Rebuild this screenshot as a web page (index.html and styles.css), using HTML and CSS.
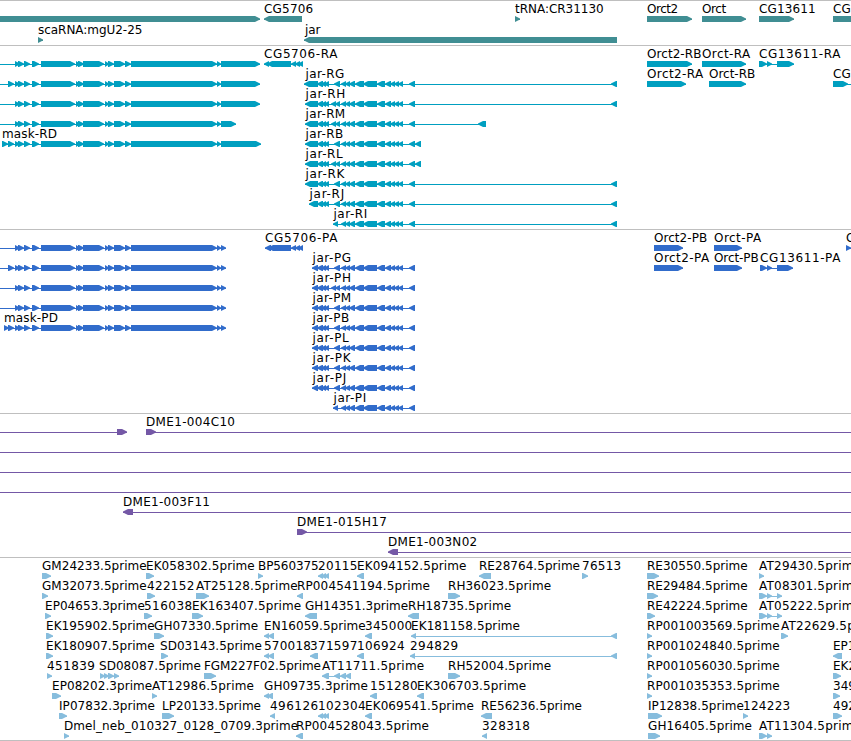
FILE: index.html
```html
<!DOCTYPE html>
<html lang="en">
<head>
<meta charset="utf-8">
<title>Genome tracks</title>
<link rel="stylesheet" href="styles.css">
</head>
<body>
<main class="browser" id="browser"></main>
<script src="tracks.js"></script>
</body>
</html>
```
FILE: styles.css
```css
* {
  box-sizing: border-box;
}

body {
  margin: 0;
  background: #fff;
  overflow: hidden;
}

.browser {
  display: flex;
  flex-direction: column;
  width: 851px;
  height: 741px;
  border-bottom: 1px solid #bfbfbf;
  overflow: hidden;
}

.track {
  display: flex;
  flex-direction: column;
  padding-top: 2px;
  border-top: 1px solid #bfbfbf;
}

.genes { height: 45px; color: #408e93; }
.transcripts { height: 184px; color: #009fc0; }
.proteins { height: 184px; color: #316ccb; }
.clones { height: 144px; color: #7458a6; }
.ests { height: 183px; color: #87bddd; }

.row {
  display: block;
  flex: none;
  width: 851px;
  height: 20px;
  overflow: visible;
}

.genes .row {
  height: 21px;
}

.shape {
  fill: currentColor;
}

.label {
  fill: #000;
  font: 12px "DejaVu Sans", sans-serif;
}
```
FILE: tracks.js
```js
// A feature has a label, a strand ('>' or '<'), exons as [start, end],
// and optionally the label's x and the extent of its connecting line.
const NS = 'http://www.w3.org/2000/svg';
const f = (label, dir, exons, labelX, from, to) => ({ label, dir, exons, labelX, from, to });

const maskBody = [[15,20],[18,24],[24,30],[32,39],[41,75],[76,80],[78,84],[83,104],[105,109],[108,114],[114,125],[125,131],[131,217],[217,221]];
const mask = (end, lead = [], label = '', x = 0) =>
  f(label, '>', [...lead, ...maskBody, [221, end]], x, lead.length > 1 ? undefined : 0);

const jarBody = [[341,346],[345,350],[349,355],[355,364],[363,377],[377,385],[385,391],[390,395],[394,399],[398,403],[409,415]];
const jar = (label, x, start, split, tail = []) => {
  const head = start === 333 ? [[333,338]]
    : [[start,318],[317,323],[321,326],[324,329], ...(split ? [[331,336],[335,340]] : [[334,340]])];
  return f(label, '<', [...head, ...jarBody, ...tail], x);
};
const far = [[611,617]];

const tracks = {
  genes: [
    [f('', '>', [[0,260]]), f('CG5706', '<', [[264,302]]), f('tRNA:CR31130', '>', [[515,520]]), f('Orct2', '>', [[647,692]]),
     f('Orct', '>', [[702,746]]), f('CG13611', '>', [[759,794]]), f('CG', '>', [[833,870]])],
    [f('scaRNA:mgU2-25', '>', [[38,43]]), f('jar', '<', [[304,617]], 305)]
  ],
  transcripts: [
    [mask(260), f('CG5706-RA', '<', [[264,269],[267,291],[291,296],[295,300],[298,303]]), f('Orct2-RB', '>', [[647,692]]),
     f('Orct-RA', '>', [[702,746]]), f('CG13611-RA', '>', [[759,767],[767,772],[777,794]])],
    [mask(260, [[8,14]]), jar('jar-RG', 305.5, 304, false, far), f('Orct2-RA', '>', [[647,686]]), f('Orct-RB', '>', [[709,746]]),
     f('CG', '>', [[833,848]], 833, 833, 851)],
    [mask(260), jar('jar-RH', 305.5, 305, true, far)],
    [mask(236), jar('jar-RM', 305.5, 305, true, [[478,486]])],
    [mask(261, [[2,8],[8,14]], 'mask-RD', 2), jar('jar-RB', 305.5, 305, false, [[415,421]])],
    [jar('jar-RL', 305.5, 305, true, [[415,421]])],
    [jar('jar-RK', 305.5, 305, false, far)],
    [jar('jar-RJ', 309.5, 309, false, far)],
    [jar('jar-RI', 333.5, 333, false, far)]
  ],
  proteins: [
    [mask(226), f('CG5706-PA', '<', [[265,271],[268,291],[291,296],[295,300],[298,303]]), f('Orct2-PB', '>', [[654,683]]),
     f('Orct-PA', '>', [[714,742]]), f('C', '>', [[846,851]])],
    [mask(226, [[8,14]]), jar('jar-PG', 312.5, 312), f('Orct2-PA', '>', [[654,683]]), f('Orct-PB', '>', [[714,742]]),
     f('CG13611-PA', '>', [[760,767],[767,772],[777,793]])],
    [mask(226), jar('jar-PH', 312.5, 312, true)],
    [mask(226), jar('jar-PM', 312.5, 312)],
    [mask(226, [[4,9],[8,14]], 'mask-PD', 4), jar('jar-PB', 312.5, 312)],
    [jar('jar-PL', 312.5, 312)],
    [jar('jar-PK', 312.5, 312)],
    [jar('jar-PJ', 312.5, 312)],
    [jar('jar-PI', 333.5, 333)]
  ],
  clones: [
    [f('', '>', [[117,127]], 0, 0), f('DME1-004C10', '>', [[146,156]], 146, 146, 851)],
    [f('', '>', [], 0, 0, 851)],
    [f('', '>', [], 0, 0, 851)],
    [f('', '>', [], 0, 0, 851)],
    [f('DME1-003F11', '<', [[123,133]], 123, 123, 851)],
    [f('DME1-015H17', '>', [[297,307]], 297, 297, 851)],
    [f('DME1-003N02', '<', [[388,398]], 388, 388, 851)]
  ],
  ests: [
    [f('GM24233.5prime', '>', [[42,51]]), f('EK058302.5prime', '>', [[146,154]]), f('BP560375', '>', [[258,263]]),
     f('20115', '<', [[318,323],[321,326],[324,329]]), f('EK094152.5prime', '<', [[357,364]]), f('RE28764.5prime', '<', [[479,491]]),
     f('76513', '>', [[582,588]]), f('RE30550.5prime', '>', [[647,659]]), f('AT29430.5prime', '>', [[759,764]])],
    [f('GM32073.5prime', '>', [[42,48]]), f('422152', '>', [[147,155]]), f('AT25128.5prime', '>', [[196,209]]),
     f('RP004541194.5prime', '<', [[297,303]]), f('RH36023.5prime', '>', [[448,460]]), f('RE29484.5prime', '>', [[647,658]]),
     f('AT08301.5prime', '>', [[759,767],[767,772],[777,782]])],
    [f('EP04653.3prime', '>', [[45,51]]), f('516038', '>', [[144,152]]), f('EK163407.5prime', '>', [[192,203]]),
     f('GH14351.3prime', '<', [[305,317]]), f('RH18735.5prime', '<', [[408,419]]), f('RE42224.5prime', '>', [[647,655]]),
     f('AT05222.5prime', '>', [[759,767],[767,772],[777,782]])],
    [f('EK195902.5prime', '>', [[46,53]]), f('GH07330.5prime', '>', [[154,164]]), f('EN16059.5prime', '<', [[264,269],[268,274]]),
     f('345000', '<', [[365,372]]), f('EK181158.5prime', '<', [[411,416],[611,617]]), f('RP001003569.5prime', '>', [[647,652]]),
     f('AT22629.5prime', '>', [[781,788]])],
    [f('EK180907.5prime', '>', [[46,53]]), f('SD03143.5prime', '>', [[161,168]], 160), f('570018', '<', [[264,269],[268,274]]),
     f('371597', '<', [[310,318]]), f('106924', '<', [[357,364]]), f('294829', '<', [[410,415],[611,617]]),
     f('RP001024840.5prime', '>', [[647,652]]), f('EP1', '<', [[833,842]])],
    [f('451839', '>', [[47,52]]), f('SD08087.5prime', '>', [[100,105],[104,109],[108,114],[114,119]], 99), f('FGM227F02.5prime', '>', [[204,216]]),
     f('AT11711.5prime', '<', [[322,329],[334,340],[340,346],[345,351]]), f('RH52004.5prime', '>', [[448,460]]),
     f('RP001056030.5prime', '>', [[647,652]]), f('EK2', '>', [[833,841]])],
    [f('EP08202.3prime', '>', [[52,61]]), f('AT12986.5prime', '>', [[152,157]]), f('GH09735.3prime', '<', [[264,269],[267,273]]),
     f('151280', '<', [[370,377]]), f('EK306703.5prime', '<', [[417,424]]), f('RP001035353.5prime', '>', [[647,652]]),
     f('349', '>', [[833,840]])],
    [f('IP07832.3prime', '>', [[59,67]]), f('LP20133.5prime', '>', [[162,174]]), f('496126', '<', [[270,275]]),
     f('102304', '<', [[318,323],[321,326],[324,329]]), f('EK069541.5prime', '<', [[365,372]]), f('RE56236.5prime', '<', [[481,492]]),
     f('IP12838.5prime', '>', [[648,662]]), f('124223', '>', [[743,748]]), f('492', '>', [[833,842]])],
    [f('Dmel_neb_010327_0128_0709.3prime', '>', [[64,69]]), f('RP004528043.5prime', '<', [[296,303]]), f('328318', '<', [[482,487]]),
     f('GH16405.5prime', '>', [[648,660]]), f('AT11304.5prime', '>', [[759,767],[767,772]])]
  ]
};

// Right edge of each label, in canvas pixels.
const labelEnds = {
  'CG5706': 312.5, 'tRNA:CR31130': 603, 'Orct2': 677.5, 'Orct': 725.5, 'CG13611': 815, 'scaRNA:mgU2-25': 141.7, 'jar': 319.7,
  'CG5706-RA': 336.7, 'Orct2-RB': 700.7, 'Orct-RA': 749.5, 'CG13611-RA': 839.7, 'Orct2-RA': 702.5, 'Orct-RB': 754.5,
  'jar-RG': 343.5, 'jar-RH': 344.5, 'jar-RM': 344.5, 'jar-RB': 342.5, 'jar-RL': 342, 'jar-RK': 343.7, 'jar-RJ': 343.5, 'jar-RI': 366.5,
  'mask-RD': 56.3, 'mask-PD': 57.3, 'CG5706-PA': 336.7, 'Orct2-PB': 706.5, 'Orct2-PA': 708.5, 'Orct-PA': 760.5, 'Orct-PB': 758,
  'CG13611-PA': 839.7, 'jar-PG': 350.3, 'jar-PH': 350.3, 'jar-PM': 350.5, 'jar-PB': 348.5, 'jar-PL': 348, 'jar-PK': 350, 'jar-PJ': 345.7, 'jar-PI': 365.5,
  'DME1-004C10': 234.3, 'DME1-003F11': 209.3, 'DME1-015H17': 386.3, 'DME1-003N02': 476.5,
  'GM24233.5prime': 146, 'EK058302.5prime': 254, 'BP560375': 318, '20115': 356.7, 'EK094152.5prime': 465.7, 'RE28764.5prime': 579.3,
  '76513': 620.5, 'RE30550.5prime': 747, 'AT29430.5prime': 860.3,
  'GM32073.5prime': 146, '422152': 193.7, 'AT25128.5prime': 297, 'RP004541194.5prime': 429.3, 'RH36023.5prime': 550.5,
  'RE29484.5prime': 747, 'AT08301.5prime': 860.3,
  'EP04653.3prime': 144.3, '516038': 191.5, 'EK163407.5prime': 300.5, 'GH14351.3prime': 407.5, 'RH18735.5prime': 510.5,
  'RE42224.5prime': 747, 'AT05222.5prime': 860.3,
  'EK195902.5prime': 154, 'GH07330.5prime': 257.5, 'EN16059.5prime': 365, '345000': 411.5, 'EK181158.5prime': 519.3,
  'RP001003569.5prime': 779, 'AT22629.5prime': 882.3,
  'EK180907.5prime': 154, 'SD03143.5prime': 261.3, '570018': 310.3, '371597': 356.7, '106924': 404, '294829': 457.5, 'RP001024840.5prime': 779,
  '451839': 94.3, 'SD08087.5prime': 200.3, 'FGM227F02.5prime': 320.3, 'AT11711.5prime': 423.5, 'RH52004.5prime': 550.5, 'RP001056030.5prime': 779,
  'EP08202.3prime': 151.5, 'AT12986.5prime': 253.3, 'GH09735.3prime': 367.3, '151280': 417, 'EK306703.5prime': 525.5, 'RP001035353.5prime': 779,
  'IP07832.3prime': 154.3, 'LP20133.5prime': 260.3, '496126': 317.5, '102304': 365, 'EK069541.5prime': 473.3, 'RE56236.5prime': 581.3,
  'IP12838.5prime': 743.3, '124223': 789.5,
  'Dmel_neb_010327_0128_0709.3prime': 297.5, 'RP004528043.5prime': 428.3, '328318': 529.3, 'GH16405.5prime': 751.3, 'AT11304.5prime': 860.3
};

function add(parent, name, attrs) {
  const node = document.createElementNS(NS, name);
  for (const key in attrs) node.setAttribute(key, attrs[key]);
  parent.appendChild(node);
  return node;
}

function drawFeature(svg, item) {
  const { exons, dir } = item;
  const from = item.from ?? exons[0][0];
  const to = item.to ?? exons[exons.length - 1][1];
  add(svg, 'rect', { class: 'shape', x: from, y: 16, width: to - from, height: 1 });
  for (const [a, b] of exons) {
    const tip = Math.min(5, b - a);
    const points = dir === '>'
      ? `${a},13 ${b - tip},13 ${b},15.6 ${b},16.4 ${b - tip},19 ${a},19`
      : `${b},13 ${a + tip},13 ${a},15.6 ${a},16.4 ${a + tip},19 ${b},19`;
    add(svg, 'polygon', { class: 'shape', points });
  }
  if (item.label) {
    const x = item.labelX ?? exons[0][0];
    const text = add(svg, 'text', { class: 'label', x, y: 10 });
    const end = labelEnds[item.label];
    if (end) text.setAttribute('textLength', (end - x + 0.7).toFixed(1));
    text.textContent = item.label;
  }
}

for (const [name, rows] of Object.entries(tracks)) {
  const section = document.createElement('section');
  section.className = `track ${name}`;
  for (const row of rows) {
    const svg = add(section, 'svg', { class: 'row' });
    row.forEach(item => drawFeature(svg, item));
  }
  document.getElementById('browser').appendChild(section);
}
```
